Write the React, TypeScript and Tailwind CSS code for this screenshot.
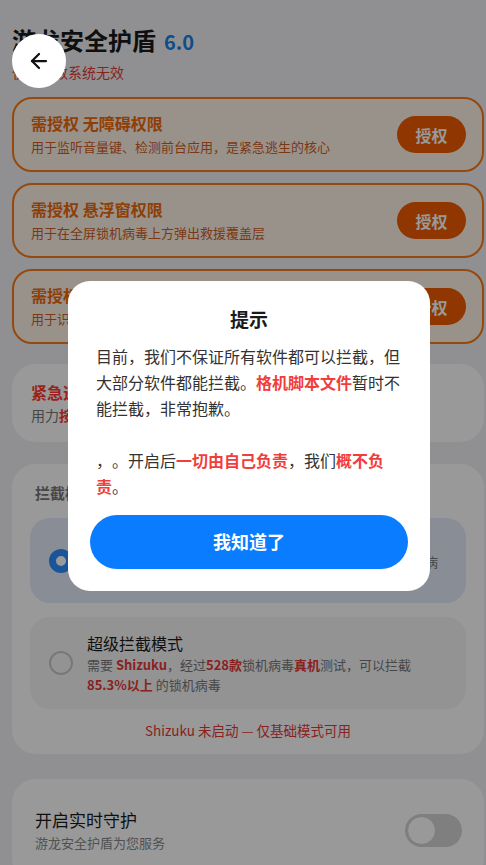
import React from "react";
import { ArrowLeft } from "lucide-react";

function PermCard({ title, desc }: { title: string; desc: string }) {
  return (
    <div className="flex h-[75px] items-center justify-between rounded-[20px] border-2 border-[#f87a18] bg-[#fff4e8] pl-[17px] pr-4">
      <div className="flex flex-col">
        <div className="text-[16px] font-bold leading-[22px] text-[#ec6a0c]">{title}</div>
        <div className="mt-[3px] text-[13px] leading-5 text-[#cf5e1e]">{desc}</div>
      </div>
      <button className="flex h-[37px] w-[69px] items-center justify-center rounded-full bg-[#f05a00] text-[16px] font-bold text-white">
        授权
      </button>
    </div>
  );
}

export default function App() {
  return (
    <div className="relative h-[865px] w-full overflow-hidden bg-[#f0f1f3] font-['Noto_Sans_CJK_SC','Noto_Sans',sans-serif] [text-spacing-trim:space-all]">
      <div className="pl-3 pr-[2px] pt-6">
        <div className="flex h-8 items-baseline leading-8">
          <span className="text-[24px] font-bold text-[#1a1a1a]">游龙安全护盾</span>
          <span className="ml-2 text-[20px] font-bold text-[#1a7fe6]">6.0</span>
        </div>
        <div className="mt-[6px] text-[14px] leading-5 text-[#e53935]">仅对少数系统无效</div>

        <div className="mt-[15px] flex flex-col gap-[11px]">
          <PermCard title="需授权 无障碍权限" desc="用于监听音量键、检测前台应用，是紧急逃生的核心" />
          <PermCard title="需授权 悬浮窗权限" desc="用于在全屏锁机病毒上方弹出救援覆盖层" />
          <PermCard title="需授权 使用情况访问权限" desc="用于识别当前正在前台运行的应用程序" />
        </div>

        <div className="mt-5 flex h-[78px] flex-col justify-center rounded-[24px] bg-white pl-[19px]">
          <div className="text-[16px] font-bold leading-[22px] text-[#ff3b30]">紧急逃生通道</div>
          <div className="mt-[2px] text-[14px] leading-5 text-[#777]">
            用力<span className="font-bold text-[#ff3b30]">按住音量下键</span>即可强制退出锁屏
          </div>
        </div>

        <div className="mt-[22px] rounded-[24px] bg-white px-[18px] pb-[14px] pt-[19px]">
          <div className="pl-[5px] text-[15px] font-bold leading-5 text-[#777]">拦截模式</div>

          <div className="mt-[15px] flex items-center gap-[14px] rounded-[20px] bg-[#e4ecfa] pb-[11px] pl-[19px] pr-[18px] pt-3">
            <div className="h-6 w-6 shrink-0 rounded-full border-[7px] border-[#2f8cff] bg-white" />
            <div className="flex flex-col">
              <div className="text-[16px] leading-[22px] text-[#1a1a1a]">基础拦截模式</div>
              <div className="text-[13px] leading-5 text-[#777]">
                无需额外权限，依靠无障碍服务实时检测，可拦截常见锁机病毒，适合大多数用户使用
              </div>
            </div>
          </div>

          <div className="mt-[14px] flex items-center gap-[14px] rounded-[20px] bg-[#f5f5f7] py-[14px] pl-[19px] pr-[18px]">
            <div className="h-6 w-6 shrink-0 rounded-full border-2 border-[#c8c8c8]" />
            <div className="flex flex-col">
              <div className="text-[16px] leading-6 text-[#1a1a1a]">超级拦截模式</div>
              <div className="text-[13px] leading-5 text-[#777]">
                需要 <span className="font-bold text-[#e53935]">Shizuku</span>，经过
                <span className="font-bold text-[#e53935]">528款</span>锁机病毒
                <span className="font-bold text-[#e53935]">真机</span>测试，可以拦截{" "}
                <span className="whitespace-nowrap font-bold text-[#e53935]">85.3%以上</span> 的锁机病毒
              </div>
            </div>
          </div>

          <div className="mt-[11px] text-center text-[13.5px] leading-5 text-[#e53935]">
            Shizuku 未启动 — 仅基础模式可用
          </div>
        </div>

        <div className="mt-[25px] flex items-center justify-between rounded-[24px] bg-white py-[29px] pl-[23px] pr-[22px]">
          <div className="flex flex-col">
            <div className="text-[17px] leading-6 text-[#1a1a1a]">开启实时守护</div>
            <div className="mt-px text-[13px] leading-5 text-[#888]">游龙安全护盾为您服务</div>
          </div>
          <div className="flex h-[33px] w-[57px] items-center rounded-full bg-[#d4d4d4] p-[2px]">
            <div className="h-[29px] w-[29px] rounded-full border border-[#cfcfcf] bg-white" />
          </div>
        </div>
      </div>

      <div className="absolute inset-0 bg-black/40" />

      <button className="absolute left-3 top-[34px] z-20 flex h-[54px] w-[54px] items-center justify-center rounded-full bg-white">
        <ArrowLeft size={24} strokeWidth={2.25} color="#111" />
      </button>

      <div className="absolute inset-0 z-10 flex items-center justify-center pl-3 pt-[6px]">
        <div className="w-[362px] rounded-[22px] bg-white px-[22px] pb-[22px] pt-[24px]">
          <div className="text-center text-[19px] font-bold leading-7 text-[#1a1a1a]">提示</div>
          <div className="mt-[10px] px-[6px] text-[16px] leading-[26px] text-[#333]">
            <p>
              目前，我们不保证所有软件都可以拦截，但大部分软件都能拦截。
              <span className="font-bold text-[#f23d3d]">格机脚本文件</span>暂时不能拦截，非常抱歉。
            </p>
            <p className="mt-[26px]">
              ，。开启后<span className="font-bold text-[#f23d3d]">一切由自己负责</span>，我们
              <span className="font-bold text-[#f23d3d]">概不负责</span>。
            </p>
          </div>
          <button className="mt-4 flex h-[54px] w-full items-center justify-center rounded-full bg-[#0a7cff] text-[18px] font-bold text-white">
            我知道了
          </button>
        </div>
      </div>
    </div>
  );
}
